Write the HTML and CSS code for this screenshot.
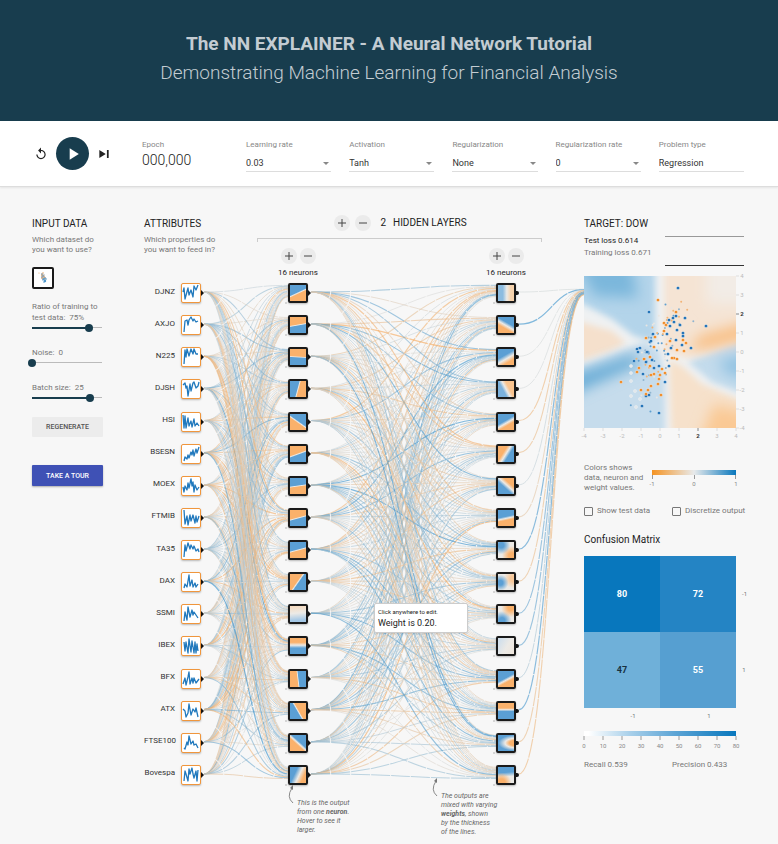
FILE: index.html
```html
<!DOCTYPE html>
<html lang="en">
<head>
<meta charset="utf-8">
<meta name="viewport" content="width=device-width, initial-scale=1">
<title>The NN Explainer</title>
<link rel="stylesheet" href="styles.css">
</head>
<body>
<header class="banner">
  <h1 class="banner-title">The NN EXPLAINER - A Neural Network Tutorial</h1>
  <p class="banner-sub">Demonstrating Machine Learning for Financial Analysis</p>
</header>

<section class="toolbar">
  <div class="playback">
    <button class="icon-btn" type="button" aria-label="Reset">
      <svg viewBox="0 0 24 24"><path d="M12 5V1L7 6l5 5V7c3.31 0 6 2.69 6 6s-2.69 6-6 6-6-2.69-6-6H4c0 4.42 3.58 8 8 8s8-3.58 8-8-3.58-8-8-8z"/></svg>
    </button>
    <button class="play-btn" type="button" aria-label="Play">
      <svg viewBox="0 0 24 24"><path d="M8 5v14l11-7z"/></svg>
    </button>
    <button class="icon-btn" type="button" aria-label="Step">
      <svg viewBox="0 0 24 24"><path d="M4 5v14l11-7zM17 5h3v14h-3z"/></svg>
    </button>
  </div>
  <div class="epoch">
    <span class="label">Epoch</span>
    <output class="epoch-value">000,000</output>
  </div>
  <div class="fields">
    <div class="field"><label class="label" for="rate">Learning rate</label><select id="rate"><option>0.03</option></select></div>
    <div class="field"><label class="label" for="activation">Activation</label><select id="activation"><option>Tanh</option></select></div>
    <div class="field"><label class="label" for="reg">Regularization</label><select id="reg"><option>None</option></select></div>
    <div class="field"><label class="label" for="reg-rate">Regularization rate</label><select id="reg-rate"><option>0</option></select></div>
    <div class="field"><label class="label" for="problem">Problem type</label><select id="problem"><option>Regression</option></select></div>
  </div>
</section>

<main class="main">
  <section class="data-col">
    <h2 class="heading">INPUT DATA</h2>
    <p class="hint">Which dataset do<br>you want to use?</p>
    <button class="dataset" type="button" aria-label="Stock dataset">
      <svg viewBox="0 0 18 18">
        <g fill="#e8a765"><circle cx="5" cy="4" r=".6"/><circle cx="8" cy="6" r="1"/><circle cx="9" cy="4" r=".8"/><circle cx="10" cy="8" r="1"/><circle cx="8" cy="9" r=".9"/><circle cx="11" cy="11" r=".7"/></g>
        <g fill="#9aa3a8"><circle cx="8" cy="5" r=".9"/><circle cx="9" cy="7" r="1.3"/><circle cx="10" cy="6" r=".7"/><circle cx="8" cy="8" r=".9"/><circle cx="11" cy="9" r="1.1"/><circle cx="9" cy="10" r="1"/></g>
        <g fill="#4d97cc"><circle cx="10" cy="10" r=".9"/><circle cx="11" cy="12" r="1.2"/><circle cx="9" cy="11" r=".7"/><circle cx="12" cy="10" r=".8"/><circle cx="10" cy="13" r=".8"/></g>
      </svg>
    </button>
    <div class="slider">
      <label for="ratio">Ratio of training to<br>test data:&nbsp; 75%</label>
      <input id="ratio" type="range" min="10" max="90" value="75" style="--fill:81%">
    </div>
    <div class="slider">
      <label for="noise">Noise:&nbsp; 0</label>
      <input id="noise" type="range" min="0" max="50" value="0" style="--fill:0%">
    </div>
    <div class="slider">
      <label for="batch">Batch size:&nbsp; 25</label>
      <input id="batch" type="range" min="1" max="30" value="25" style="--fill:83%">
    </div>
    <button class="btn" type="button">REGENERATE</button>
    <button class="btn btn-tour" type="button">TAKE A TOUR</button>
  </section>

  <section class="network" id="network">
    <svg class="links" id="links" aria-hidden="true"></svg>
    <div class="attributes">
      <h2 class="heading">ATTRIBUTES</h2>
      <p class="hint">Which properties do<br>you want to feed in?</p>
      <div class="nodes nodes-input" id="inputs"></div>
    </div>
    <div class="hidden">
      <div class="hidden-head">
        <button class="round" type="button" aria-label="Add layer"><svg viewBox="0 0 16 16"><path d="M4 8h8M8 4v8"/></svg></button>
        <button class="round" type="button" aria-label="Remove layer"><svg viewBox="0 0 16 16"><path d="M4 8h8"/></svg></button>
        <h2 class="heading hidden-title"><span>2</span><span>HIDDEN LAYERS</span></h2>
      </div>
      <div class="bracket"></div>
      <div class="layers">
        <div class="layer">
          <div class="layer-controls">
            <button class="round" type="button" aria-label="Add neuron"><svg viewBox="0 0 16 16"><path d="M4 8h8M8 4v8"/></svg></button>
            <button class="round" type="button" aria-label="Remove neuron"><svg viewBox="0 0 16 16"><path d="M4 8h8"/></svg></button>
          </div>
          <p class="layer-count">16 neurons</p>
          <div class="nodes" id="layer1"></div>
        </div>
        <div class="layer">
          <div class="layer-controls">
            <button class="round" type="button" aria-label="Add neuron"><svg viewBox="0 0 16 16"><path d="M4 8h8M8 4v8"/></svg></button>
            <button class="round" type="button" aria-label="Remove neuron"><svg viewBox="0 0 16 16"><path d="M4 8h8"/></svg></button>
          </div>
          <p class="layer-count">16 neurons</p>
          <div class="nodes" id="layer2"></div>
        </div>
      </div>
      <div class="notes">
        <div class="note note-low">
          <svg class="note-arrow" viewBox="0 0 10 20"><path d="M6 18Q-1 12 5 3"/><path class="tip" d="M6 0v5L3 3z"/></svg>
          This is the output<br>from one <b>neuron</b>.<br>Hover to see it<br>larger.
        </div>
        <div class="note">
          <svg class="note-arrow" viewBox="0 0 10 20"><path d="M6 18Q-1 12 5 3"/><path class="tip" d="M6 0v5L3 3z"/></svg>
          The outputs are<br>mixed with varying<br><b>weights</b>, shown<br>by the thickness<br>of the lines.
        </div>
      </div>
    </div>
    <div class="tooltip" role="tooltip">
      <p class="tooltip-hint">Click anywhere to edit.</p>
      <p class="tooltip-value">Weight is 0.20.</p>
    </div>
  </section>

  <section class="output-col">
    <div class="loss">
      <div>
        <h2 class="heading">TARGET: DOW</h2>
        <p class="loss-test">Test loss 0.614</p>
        <p class="loss-train">Training loss 0.671</p>
      </div>
      <svg class="loss-chart" viewBox="0 0 79 32" preserveAspectRatio="none"><path stroke="#999" d="M0 1.5h79"/><path stroke="#333" d="M0 30.5h79"/></svg>
    </div>

    <svg class="heatmap" viewBox="0 0 162 165" role="img" aria-label="Model output over the input plane">
      <defs>
        <filter id="soft" x="-20%" y="-20%" width="140%" height="140%"><feGaussianBlur stdDeviation="3"/></filter>
        <filter id="softer" x="-50%" y="-50%" width="200%" height="200%"><feGaussianBlur stdDeviation="7"/></filter>
        <clipPath id="plane"><rect width="152" height="152"/></clipPath>
      </defs>
      <g clip-path="url(#plane)">
        <rect width="152" height="152" fill="#eff1f2"/>
        <g filter="url(#soft)">
          <path fill="#b3d4ea" d="M-20-20H71V66L50 60 28 43-20 18z"/>
          <path fill="#c6dcec" d="M-20 98 35 76 60 66 75 74 81 100V170H-20z"/>
          <path fill="#f5e0cc" d="M-20 40 0 47 28 55 42 67 26 75 0 84-20 90z"/>
          <path fill="#f5e4d4" d="M80-20H170V60L104 82 80 76z"/>
          <path fill="#f6e1cb" d="M85 84 98 90 118 108 170 130V170H88z"/>
          <path fill="#c3dbec" d="M170 61 104 86 128 106 170 122z"/>
        </g>
        <g filter="url(#softer)">
          <path fill="#7cb7dc" d="M-10-20H46L54 22 10 20z"/>
          <path fill="#f2ece6" d="M122-20H180V28L122 28z"/>
          <path fill="#93c3e2" d="M180 74 134 84 142 98 180 108z"/>
          <path fill="#fac994" d="M130 128 180 142V180H110z"/>
          <path fill="#66abd6" d="M-20 102 50 78 56 88 20 104-20 122z"/>
          <path fill="#f9bd80" d="M180 42 116 60 104 74 124 72 180 58z"/>
        </g>
        <g id="points"></g>
      </g>
      <g id="axes" class="axis"></g>
    </svg>

    <div class="legend">
      <p class="hint legend-text">Colors shows<br>data, neuron and<br>weight values.</p>
      <svg class="legend-scale" viewBox="0 0 94 24">
        <defs><linearGradient id="diverge"><stop offset="0" stop-color="#f59322"/><stop offset=".5" stop-color="#e8eaeb"/><stop offset="1" stop-color="#0877bd"/></linearGradient></defs>
        <rect x="5" y="2" width="84" height="5" fill="url(#diverge)"/>
        <path stroke="#999" d="M5.5 7v4M47.5 7v4M88.5 7v4"/>
        <g class="axis"><text x="5" y="18">-1</text><text x="47" y="18">0</text><text x="89" y="18">1</text></g>
      </svg>
    </div>

    <div class="checks">
      <label><input type="checkbox">Show test data</label>
      <label><input type="checkbox">Discretize output</label>
    </div>

    <h2 class="heading matrix-title">Confusion Matrix</h2>
    <table class="matrix">
      <tbody>
        <tr><td class="c80">80</td><td class="c72">72</td><th scope="row">-1</th></tr>
        <tr><td class="c47">47</td><td class="c55">55</td><th scope="row">1</th></tr>
      </tbody>
      <tfoot><tr><th scope="col">-1</th><th scope="col">1</th><th></th></tr></tfoot>
    </table>

    <svg class="count-scale" viewBox="0 0 162 22">
      <defs><linearGradient id="counts"><stop offset="0" stop-color="#fff"/><stop offset=".03" stop-color="#fff"/><stop offset=".3" stop-color="#a9d0ea"/><stop offset=".6" stop-color="#5ca4d5"/><stop offset="1" stop-color="#0877bd"/></linearGradient></defs>
      <rect width="152" height="5" fill="url(#counts)"/>
      <g id="countTicks" class="axis"></g>
    </svg>
    <div class="scores"><span>Recall 0.539</span><span>Precision 0.433</span></div>
  </section>
</main>
<script src="script.js"></script>
</body>
</html>
```

FILE: styles.css
```css
:root {
  --navy: #183d4e;
  --orange: #f0963c;
  --roboto: Roboto, "Liberation Sans", sans-serif;
}

* { box-sizing: border-box; }

body {
  margin: 0;
  background: #f7f7f7;
  color: #333;
  font: 8px/10px var(--roboto);
}

h1, h2, p { margin: 0; }
button { padding: 0; border: 0; background: none; cursor: pointer; }
svg { display: block; overflow: visible; }

/* Banner */
.banner {
  padding: 29px 16px 34px;
  background: var(--navy);
  color: #c3ccd2;
  text-align: center;
}
.banner-title, .banner-sub { font-size: 19px; line-height: 29px; }
.banner-title { font-weight: 700; }
.banner-sub { font-weight: 300; }

/* Toolbar */
.toolbar {
  display: grid;
  grid-template-columns: 108px 104px 1fr;
  min-height: 66px;
  padding: 0 34px;
  background: #fff;
  border-bottom: 1px solid #ddd;
  box-shadow: 0 1px 2px rgba(0, 0, 0, .08);
}
.playback { display: flex; align-items: center; align-self: center; gap: 8px; }
.icon-btn svg { width: 14px; height: 14px; fill: #222; }
.play-btn {
  display: grid;
  place-items: center;
  width: 33px;
  height: 33px;
  border-radius: 50%;
  background: var(--navy);
}
.play-btn svg { width: 20px; height: 20px; fill: #fff; }
.label { display: block; color: #888; line-height: 10px; }
.epoch, .fields { padding-top: 19px; }
.epoch-value { display: block; color: #222; font-size: 14px; font-weight: 300; line-height: 20px; }
.fields { display: grid; grid-template-columns: repeat(5, 1fr); gap: 18px; }
.field { position: relative; }
.field select {
  width: 100%;
  height: 18px;
  margin-top: 4px;
  padding: 0;
  border: 0;
  border-bottom: 1px solid #ddd;
  border-radius: 0;
  appearance: none;
  color: #333;
  background: none;
  font: 400 9px/16px var(--roboto);
}
.field:not(:last-child)::after {
  content: "";
  position: absolute;
  right: 2px;
  top: 22px;
  border: 3px solid transparent;
  border-top-color: #888;
  border-bottom: 0;
  pointer-events: none;
}

/* Main grid */
.main {
  display: grid;
  grid-template-columns: 71px 1fr 162px;
  gap: 40px;
  padding: 28px 32px 7px;
}
.heading { color: #222; font: 400 10px/12px var(--roboto); white-space: nowrap; }
.hint { color: #777; white-space: nowrap; }
.heading + .hint { margin-top: 5px; }
.data-col, .attributes, .output-col { padding-top: 3px; }

/* Dataset controls */
.dataset {
  display: block;
  width: 22px;
  height: 22px;
  margin: 12px 0;
  border: 2px solid #1a1a1a;
  border-radius: 2px;
  background: #fff;
}
.slider { margin-bottom: 14px; color: #777; line-height: 11px; white-space: nowrap; }
.slider label { display: block; }
.slider input {
  display: block;
  width: 78px;
  height: 10px;
  margin: 0 -4px;
  appearance: none;
  background: none;
}
.slider input::-webkit-slider-runnable-track {
  height: 2px;
  background:
    linear-gradient(var(--navy), var(--navy)) 4px 0 / calc(var(--fill) - 8px) 2px no-repeat,
    linear-gradient(#bbb, #bbb) 4px 0 / calc(100% - 8px) 1px no-repeat;
}
.slider input::-webkit-slider-thumb {
  appearance: none;
  width: 8px;
  height: 8px;
  margin-top: -3px;
  border-radius: 50%;
  background: var(--navy);
}
.btn {
  display: block;
  width: 100%;
  height: 20px;
  border-radius: 1px;
  background: #ececec;
  color: #555;
  font: 500 7px/20px var(--roboto);
}
.btn-tour {
  height: 21px;
  margin-top: 28px;
  background: #3f51b5;
  color: #fff;
  box-shadow: 0 1px 2px rgba(0, 0, 0, .3);
}

/* Network */
.network {
  position: relative;
  display: grid;
  grid-template-columns: 60px 1fr;
  gap: 53px;
  margin-left: 1px;
}
.links { position: absolute; inset: 0; width: 100%; height: 100%; fill: none; pointer-events: none; }
.attributes .nodes { margin-top: 28px; }
.nodes {
  position: relative;
  display: flex;
  flex-direction: column;
  justify-content: space-between;
  align-items: center;
  height: 502px;
}
.nodes-input { align-items: stretch; }
.attribute { display: flex; align-items: center; gap: 6px; height: 20px; }
.attribute span { flex: none; width: 31px; padding-bottom: 3px; color: #333; text-align: right; white-space: nowrap; }
.node {
  position: relative;
  flex: none;
  width: 20px;
  height: 20px;
  border: 2px solid #1a1a1a;
  border-radius: 2px;
  box-shadow: 0 1px 2px rgba(0, 0, 0, .25);
}
.node::before {
  content: "";
  position: absolute;
  left: 100%;
  top: 5px;
  margin-left: 2px;
  border: 3px solid transparent;
  border-left-color: #111;
  border-right: 0;
}
.neuron::after {
  content: "";
  position: absolute;
  left: -5px;
  bottom: -3px;
  width: 2px;
  height: 2px;
  background: #d5d5d5;
}
#layer2 .node::before {
  top: 6px;
  width: 3px;
  height: 4px;
  border: 0;
  border-radius: 0 2px 2px 0;
  background: #111;
}
.node-input { border: 1px solid var(--orange); background: #fff; }
.node-input::before { top: 6px; margin-left: 1px; }
.node-input svg { width: 20px; height: 20px; margin: -1px; fill: none; stroke: #2179bd; stroke-width: 1.3; stroke-linejoin: round; }

.hidden { position: relative; min-width: 0; }
.hidden-head { display: flex; justify-content: center; align-items: center; gap: 5px; }
.hidden-title { display: flex; gap: 7px; margin-left: 4px; }
.round { width: 16px; height: 16px; border-radius: 50%; background: #ebebeb; }
.round svg { width: 16px; height: 16px; fill: none; stroke: #444; stroke-width: 1; }
.bracket { height: 4px; margin: 7px 2px 0 0; border: 1px solid #ccc; border-bottom: 0; }
.layers { display: flex; justify-content: space-between; padding: 6px 6px 0 9px; }
.layer { width: 64px; }
.layer-controls { display: flex; justify-content: center; gap: 3px; }
.layer-count { margin: 3px 0 4px; color: #222; line-height: 12px; text-align: center; }
.notes { display: flex; gap: 84px; margin: 7px 0 0 40px; }
.note { position: relative; width: 60px; color: #666; font: italic 7px/9px var(--roboto); white-space: nowrap; }
.note-low { margin-top: 7px; }
.note-arrow { position: absolute; left: -10px; top: -14px; width: 10px; height: 20px; fill: none; stroke: #888; stroke-width: 1; }
.note-arrow .tip { fill: #777; stroke: none; }

.tooltip {
  position: absolute;
  left: 230px;
  top: 388px;
  width: 94px;
  padding: 3px;
  border: 1px solid #ccc;
  border-radius: 2px;
  background: #fff;
  color: #222;
  box-shadow: 0 1px 2px rgba(0, 0, 0, .12);
}
.tooltip-hint { font-size: 6px; line-height: 10px; }
.tooltip-value { font-size: 9px; line-height: 12px; }

/* Output */
.loss { display: flex; justify-content: space-between; height: 58px; padding-right: 2px; }
.loss-test, .loss-train { line-height: 12px; white-space: nowrap; }
.loss-test { margin-top: 5px; color: #222; }
.loss-train { color: #777; }
.loss-chart { width: 79px; height: 32px; margin-top: 17px; flex: none; }
.heatmap, .count-scale { width: 100%; height: auto; }
.axis text { fill: #888; font: 6px var(--roboto); text-anchor: middle; }
.axis .faint { fill: #bbb; }
.axis .strong { fill: #333; font-weight: 700; }
.legend { display: flex; justify-content: space-between; margin: 22px 5px 0 0; }
.legend-scale { width: 94px; height: 24px; margin-top: 5px; }
.checks { display: grid; grid-template-columns: 88px 1fr; margin-top: 13px; color: #777; }
.checks label { display: flex; align-items: center; gap: 4px; white-space: nowrap; }
.checks input {
  flex: none;
  width: 9px;
  height: 9px;
  margin: 0;
  appearance: none;
  border: 1px solid #777;
  border-radius: 1px;
}
.matrix-title { margin-top: 18px; }
.matrix { width: 100%; margin-top: 10px; border-collapse: collapse; table-layout: fixed; }
.matrix td { width: 76px; height: 76px; padding: 0; color: #fff; text-align: center; font-size: 9px; font-weight: 700; }
.matrix th { padding: 0; color: #777; font: 6px/16px var(--roboto); }
.matrix tbody th { padding-left: 6px; white-space: nowrap; }
.matrix tfoot th { padding-left: 22px; }
.matrix tfoot th:last-child { padding: 0; }
.matrix .c80 { background: #0877bd; }
.matrix .c72 { background: #2484c4; }
.matrix .c47 { background: #6fb0d9; color: #17303f; }
.matrix .c55 { background: #569fd1; }
.count-scale { margin-top: 7px; }
.scores { display: grid; grid-template-columns: 88px 1fr; margin-top: 7px; color: #777; }
```

FILE: script.js
```js
const SVG_NS = 'http://www.w3.org/2000/svg';
const BLUE = '#5b9fd4';
const ORANGE = '#fab16b';
const PALE = '#eceae6';

const attributes = [
  ['DJNZ', '2,9 3,5 4,16 7,5 8,12 10,7 12,14 13,3 15,7 17,2'],
  ['AXJO', '3,17 4,6 6,5 7,10 8,5 10,2 12,6 13,4 15,7 17,6'],
  ['N225', '3,17 4,3 5,10 6,2 8,9 10,2 12,7 13,2 15,7 17,7'],
  ['DJSH', '2,6 4,4 5,9 6,7 7,17 9,5 10,12 12,4 13,3 15,9 17,7 18,3'],
  ['HSI', '2,3 3,16 4,4 5,16 7,6 8,14 10,9 11,15 13,7 14,14 16,11 18,14'],
  ['BSESN', '3,17 4,13 6,15 7,11 8,14 10,8 11,11 12,6 13,12 15,5 16,9 18,3'],
  ['MOEX', '2,11 3,16 4,10 6,14 7,7 8,12 10,3 11,10 12,6 13,16 14,9 16,14 18,11'],
  ['FTMIB', '3,2 4,16 6,8 7,17 9,7 10,13 12,7 14,15 15,8 16,14 18,8'],
  ['TA35', '3,17 4,5 5,11 7,3 9,9 10,5 12,9 13,6 15,11 17,9 18,12'],
  ['DAX', '3,16 4,12 6,15 8,3 9,14 11,8 12,15 14,11 15,15 17,12'],
  ['SSMI', '3,17 4,8 6,16 7,3 9,13 11,6 12,11 13,8 15,11 17,14'],
  ['IBEX', '3,6 4,15 5,6 7,17 8,3 10,16 11,5 13,17 14,6 15,17 16,8 17,15'],
  ['BFX', '2,15 4,9 5,16 7,8 8,3 9,15 11,9 12,14 13,9 15,14 18,10'],
  ['ATX', '2,8 4,10 5,16 7,12 8,3 10,14 12,8 14,11 15,7 17,16'],
  ['FTSE100', '3,15 4,16 6,9 7,12 8,3 10,11 12,8 13,12 15,11 17,15'],
  ['Bovespa', '3,16 4,6 5,9 7,16 8,4 9,9 11,3 12,9 13,13 15,6 16,16 17,5']
];

/* split(angle, first colour, second colour, boundary %, softness %) */
const split = (angle, a, b, at = 50, soft = 5) =>
  `linear-gradient(${angle}deg, ${a} ${at - soft}%, ${PALE} ${at}%, ${b} ${at + soft}%)`;
const spots = (x1, y1, c1, x2, y2, c2) =>
  `radial-gradient(circle at ${x1}% ${y1}%, ${c1} 15%, transparent 50%), ` +
  `radial-gradient(circle at ${x2}% ${y2}%, ${c2} 15%, transparent 50%), ` +
  `linear-gradient(${PALE}, ${PALE})`;

const layer1 = [
  split(155, BLUE, ORANGE), split(170, ORANGE, BLUE), split(183, ORANGE, BLUE),
  split(105, BLUE, ORANGE), split(35, ORANGE, BLUE), split(160, ORANGE, BLUE),
  split(172, BLUE, ORANGE), split(165, ORANGE, BLUE), split(165, BLUE, ORANGE),
  split(125, ORANGE, BLUE), split(175, '#f5dcc2', '#a5c8e6', 45, 40), split(180, ORANGE, BLUE, 45, 18),
  split(83, ORANGE, BLUE), split(60, BLUE, ORANGE), split(42, ORANGE, BLUE, 50, 8), split(115, BLUE, ORANGE, 55, 22)
];
const layer2 = [
  split(90, '#8cbce0', '#f6d3ad', 55, 25), split(30, ORANGE, BLUE, 48, 14), split(150, BLUE, ORANGE, 58, 18),
  split(62, '#7bb1dc', '#f9c48f', 50, 14), split(150, BLUE, ORANGE, 55, 12), split(122, ORANGE, BLUE, 50, 14),
  split(42, BLUE, ORANGE, 55, 14), split(168, BLUE, ORANGE, 52, 10),
  spots(20, 20, BLUE, 85, 85, ORANGE), spots(15, 55, BLUE, 95, 30, '#f7c89a'),
  spots(80, 10, ORANGE, 25, 90, BLUE), split(120, '#d3e0eb', '#eee6dd', 55, 40),
  split(152, BLUE, ORANGE, 55, 10), split(180, ORANGE, BLUE, 42, 10),
  `radial-gradient(ellipse at 110% 50%, ${ORANGE} 25%, ${PALE} 42%, ${BLUE} 70%)`,
  `radial-gradient(circle at 20% 100%, ${ORANGE} 20%, transparent 50%), linear-gradient(175deg, ${BLUE} 35%, ${PALE} 60%)`
];

function random(seed) {
  return () => {
    seed = (seed + 0x6d2b79f5) | 0;
    let t = Math.imul(seed ^ (seed >>> 15), 1 | seed);
    t = (t + Math.imul(t ^ (t >>> 7), 61 | t)) ^ t;
    return ((t ^ (t >>> 14)) >>> 0) / 4294967296;
  };
}

function add(parent, name, attrs, text) {
  const el = document.createElementNS(SVG_NS, name);
  for (const key in attrs) el.setAttribute(key, attrs[key]);
  if (text !== undefined) el.textContent = text;
  parent.appendChild(el);
  return el;
}

document.getElementById('inputs').innerHTML = attributes.map(([name, points]) =>
  `<div class="attribute"><span>${name}</span><div class="node node-input"><svg viewBox="0 0 20 20"><polyline points="${points}"/></svg></div></div>`
).join('');
[['layer1', layer1], ['layer2', layer2]].forEach(([id, fills]) => {
  document.getElementById(id).innerHTML =
    fills.map(fill => `<div class="node neuron" style="background-image:${fill}"></div>`).join('');
});

/* Colour of a weight in [-1, 1] */
function weightColor(w) {
  const zero = [214, 216, 214];
  const end = w < 0 ? [246, 166, 86] : [50, 142, 202];
  const t = Math.min(1, Math.abs(w));
  return `rgb(${zero.map((c, i) => Math.round(c + (end[i] - c) * t)).join()})`;
}

function drawLinks() {
  const svg = document.getElementById('links');
  const box = document.getElementById('network').getBoundingClientRect();
  const next = random(11);
  const centers = id => [...document.querySelectorAll(`#${id} .node`)].map(node => {
    const r = node.getBoundingClientRect();
    return { left: r.left - box.left, right: r.right - box.left, y: r.top - box.top + r.height / 2 };
  });
  const link = (x1, y1, x2, y2, w) => {
    const mid = (x1 + x2) / 2;
    add(svg, 'path', {
      d: `M${x1} ${y1}C${mid} ${y1} ${mid} ${y2} ${x2} ${y2}`,
      stroke: weightColor(w),
      'stroke-width': 0.9 + Math.abs(w) * 0.3,
      'stroke-opacity': 0.6,
      'stroke-dasharray': '19 1'
    });
  };
  svg.replaceChildren();
  const columns = [centers('inputs'), centers('layer1'), centers('layer2')];
  for (let c = 0; c < 2; c++) {
    columns[c + 1].forEach(target => {
      columns[c].forEach((source, i) => {
        const w = (next() + next() + next() - 1.5) * 0.8;
        link(source.right + 3, source.y - 1, target.left, target.y - 2 + (i - 7.5) / 16 * 12, w);
      });
    });
  }
  const heat = document.querySelector('.heatmap').getBoundingClientRect();
  const weights = [0.05, 1, 0.03, 0.04, -0.7, -0.6, 0.15, -0.4, 0.9, -0.6, 0.7, 0.7, 0.3, 0.9, -0.6, -0.7];
  columns[2].forEach((source, i) => {
    link(source.right + 3, source.y - 1, heat.left - box.left, heat.top - box.top + 16 + (i - 7.5) / 16 * 6, weights[i]);
  });
}

/* Sample points, in plane pixels */
function drawPoints() {
  const group = document.getElementById('points');
  const next = random(5);
  for (let i = 0; i < 75; i++) {
    const t = next() + next() + next() - 1.5;
    const cx = 75 + t * 24 + (next() - 0.5) * 34;
    const cy = 74 - t * 48 + (next() - 0.5) * 44;
    add(group, 'circle', { cx, cy, r: 1, fill: ['#5f9fd0', '#f2b477', '#e9e6e2', '#8fb4cf'][i % 4] });
  }
  [[47,90],[47,97],[47,105],[51,115],[52,131],[47,120],[56,123]].forEach(([cx, cy]) =>
    add(group, 'circle', { cx, cy, r: 1.5, fill: '#dfe6ea', stroke: '#f2f2f2', 'stroke-width': 0.5 }));
  const dots = {
    '#1b6fb5': [[94,12],[65,36],[89,42],[92,40],[101,42],[122,50],[85,44],[90,46],[86,50],[107,72],[99,60],[92,64],[99,57],[69,58],[66,66],[53,73],[56,72],[54,76],[64,76],[70,92],[59,98],[62,120],[65,119],[58,130],[75,137],[85,90],[87,72],[83,58],[98,69],[93,54],[50,85],[62,86],[68,84],[81,106],[84,78],[67,65],[63,76],[75,90],[96,49]],
    '#f08a24': [[74,24],[92,36],[80,47],[62,62],[82,49],[99,64],[102,67],[100,75],[93,74],[80,55],[86,65],[71,61],[70,71],[53,96],[66,90],[67,99],[60,83],[66,81],[70,98],[76,99],[75,103],[74,108],[67,110],[57,114],[64,114],[62,118],[77,119],[37,106],[90,82],[93,83],[88,82],[78,93],[55,92],[81,97]]
  };
  for (const fill in dots) dots[fill].forEach(([cx, cy]) => add(group, 'circle', { cx, cy, r: 1.6, fill, stroke: '#fff', 'stroke-width': 0.3 }));
}

function drawAxes() {
  const axes = document.getElementById('axes');
  for (let v = -4; v <= 4; v++) {
    const cls = v === 2 ? 'strong' : 'faint';
    const x = (v + 4) * 19;
    const y = (4 - v) * 19;
    add(axes, 'text', { x, y: 162, class: cls }, v);
    add(axes, 'text', { x: 158, y: y + 2, class: cls }, v);
    add(axes, 'path', { d: `M${x} 152v3M152 ${y}h3`, stroke: v === 2 ? '#888' : '#ddd' });
  }
  const ticks = document.getElementById('countTicks');
  for (let i = 0; i <= 8; i++) {
    add(ticks, 'path', { d: `M${i * 19} 5v4`, stroke: '#999' });
    add(ticks, 'text', { x: i * 19, y: 17 }, i * 10);
  }
}

drawPoints();
drawAxes();
drawLinks();
window.addEventListener('resize', drawLinks);
```
